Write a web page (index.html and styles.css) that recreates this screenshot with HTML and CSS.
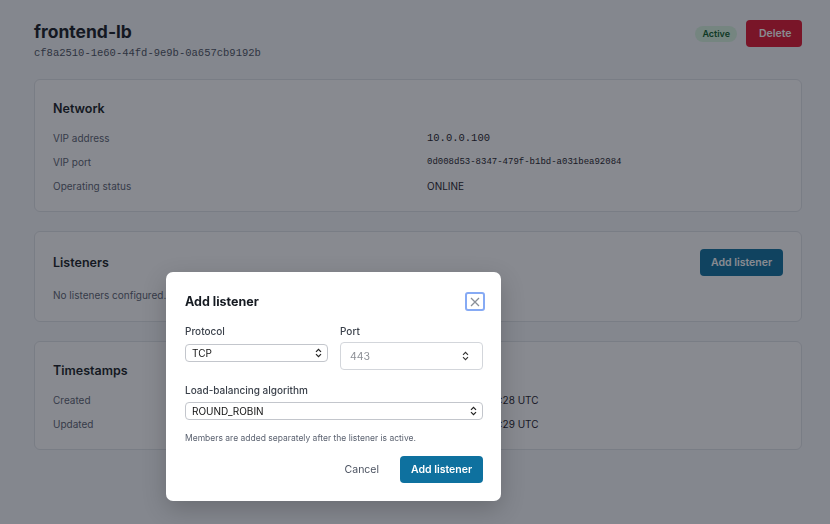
FILE: index.html
```html
<!DOCTYPE html>
<html lang="en">
<head>
  <meta charset="UTF-8">
  <title>frontend-lb | Load balancer</title>
  <meta name="viewport" content="width=device-width, initial-scale=1.0">
  <link rel="stylesheet" href="styles.css">
</head>
<body>
  <div class="page">
    <!-- HEADER -->
    <div class="page-head">
      <div>
        <h1>frontend-lb</h1>
        <div class="mono uuid">cf8a2510-1e60-44fd-9e9b-0a657cb9192b</div>
      </div>
      <div class="head-actions">
        <span class="badge">Active</span>
        <button class="btn btn-danger">Delete</button>
      </div>
    </div>

    <!-- NETWORK -->
    <div class="card">
      <h2>Network</h2>
      <div class="rows">
        <div class="label">VIP address</div>
        <div class="value mono">10.0.0.100</div>
        <div class="label">VIP port</div>
        <div class="value mono small">0d008d53-8347-479f-b1bd-a031bea92084</div>
        <div class="label">Operating status</div>
        <div class="value">ONLINE</div>
      </div>
    </div>

    <!-- LISTENERS -->
    <div class="card card-listeners">
      <div class="card-head">
        <h2>Listeners</h2>
        <button class="btn btn-primary">Add listener</button>
      </div>
      <p class="empty">No listeners configured.</p>
    </div>

    <!-- TIMESTAMPS -->
    <div class="card">
      <h2>Timestamps</h2>
      <div class="rows">
        <div class="label">Created</div>
        <div class="value">2024-5-14 9:12:28 UTC</div>
        <div class="label">Updated</div>
        <div class="value">2024-5-14 9:12:29 UTC</div>
      </div>
    </div>
  </div>

  <!-- MODAL -->
  <div class="overlay"></div>
  <div class="modal" id="addListener">
    <div class="modal-head">
      <h3>Add listener</h3>
      <button class="close" aria-label="Close">
        <svg width="10" height="10" viewBox="0 0 10 10"><path d="M1 1L9 9M9 1L1 9" stroke="#8a8f98" stroke-width="1.3" fill="none"/></svg>
      </button>
    </div>

    <div class="field-grid">
      <label class="field">
        <span class="field-label">Protocol</span>
        <span class="select-wrap">
          <select class="select">
            <option>TCP</option>
            <option>HTTP</option>
            <option>HTTPS</option>
          </select>
          <svg class="chev" width="7" height="10" viewBox="0 0 7 10"><path d="M1 3.8L3.5 1.3L6 3.8M1 6.2L3.5 8.7L6 6.2" stroke="#222" stroke-width="1.2" fill="none"/></svg>
        </span>
      </label>
      <label class="field">
        <span class="field-label">Port</span>
        <span class="select-wrap">
          <input class="input" type="number" placeholder="443">
          <svg class="chev chev-port" width="7" height="10" viewBox="0 0 7 10"><path d="M1 3.8L3.5 1.3L6 3.8M1 6.2L3.5 8.7L6 6.2" stroke="#333" stroke-width="1.1" fill="none"/></svg>
        </span>
      </label>
    </div>

    <label class="field field-wide">
      <span class="field-label">Load-balancing algorithm</span>
      <span class="select-wrap">
        <select class="select">
          <option>ROUND_ROBIN</option>
          <option>LEAST_CONNECTIONS</option>
          <option>SOURCE_IP</option>
        </select>
        <svg class="chev" width="7" height="10" viewBox="0 0 7 10"><path d="M1 3.8L3.5 1.3L6 3.8M1 6.2L3.5 8.7L6 6.2" stroke="#222" stroke-width="1.2" fill="none"/></svg>
      </span>
    </label>

    <p class="hint">Members are added separately after the listener is active.</p>

    <div class="modal-foot">
      <button class="btn btn-ghost">Cancel</button>
      <button class="btn btn-primary">Add listener</button>
    </div>
  </div>
</body>
</html>
```

FILE: styles.css
```css
body {
  margin: 0;
  background: #f7f8fa;
  font-family: 'Inter', 'Noto Sans', sans-serif;
  color: #161b22;
}
.page {
  padding: 20px 28px 0 34px;
}
.mono {
  font-family: 'Liberation Mono', monospace;
}
.page-head {
  display: flex;
  justify-content: space-between;
  align-items: flex-start;
  margin-bottom: 19px;
}
h1 {
  margin: 0;
  font-size: 17.5px;
  font-weight: 700;
  line-height: 22px;
  margin-top: 1px;
}
.uuid {
  font-size: 10.5px;
  color: #4b5260;
  margin-top: 3px;
  line-height: 14px;
}
.head-actions {
  display: flex;
  align-items: center;
  gap: 9px;
}
.badge {
  background: #d8f5df;
  color: #0b5d27;
  font-size: 9px;
  font-weight: 600;
  padding: 3px 7px;
  border-radius: 10px;
  line-height: 10px;
}
.btn {
  font-family: inherit;
  border: none;
  border-radius: 4px;
  font-size: 10.5px;
  font-weight: 600;
  height: 27px;
  padding: 0 13px;
  cursor: pointer;
}
.btn-danger {
  background: #e0142e;
  color: #fff;
  width: 56px;
}
.btn-primary {
  background: #0e719f;
  color: #fff;
  width: 83px;
  padding: 0;
}
.btn-ghost {
  background: transparent;
  color: #4b5260;
  font-weight: 400;
  padding: 0 10px;
}
.card {
  background: #fff;
  border: 1px solid #e1e4e8;
  border-radius: 6px;
  padding: 21px 18px 13px;
  margin-bottom: 19px;
}
.card h2 {
  margin: 0;
  font-size: 12.5px;
  font-weight: 600;
  line-height: 16px;
}
.rows {
  display: grid;
  grid-template-columns: 1fr 1fr;
  column-gap: 18px;
  margin-top: 9px;
}
.rows > div {
  height: 24px;
  line-height: 24px;
  font-size: 10px;
}
.label {
  color: #5b6270;
}
.value {
  color: #1b2028;
}
.value.mono {
  font-size: 10.5px;
}
.value.mono.small {
  font-size: 9px;
}
.card-listeners {
  padding: 17px 18px 18px;
}
.card-head {
  display: flex;
  justify-content: space-between;
  align-items: center;
}
.card-head h2 {
  margin-top: 1px;
}
.empty {
  margin: 11px 0 0;
  font-size: 10px;
  line-height: 16px;
  color: #5b6270;
}
.overlay {
  position: fixed;
  inset: 0;
  background: rgba(17, 22, 34, 0.5);
}
.modal {
  position: absolute;
  left: 166px;
  top: 272px;
  width: 298px;
  padding: 20px 18px 18px 19px;
  background: #fff;
  border-radius: 7px;
  box-shadow: 0 8px 24px rgba(0, 0, 0, 0.2);
}
.modal-head {
  display: flex;
  justify-content: space-between;
  align-items: center;
  height: 19px;
  margin-bottom: 13px;
}
.modal-head h3 {
  margin: 0;
  font-size: 12.5px;
  font-weight: 700;
}
.close {
  width: 20px;
  height: 19px;
  margin-right: -2px;
  padding: 0;
  border: 2px solid #86aaf4;
  border-radius: 3px;
  background: #fff;
  display: flex;
  align-items: center;
  justify-content: center;
}
.field-grid {
  display: grid;
  grid-template-columns: 1fr 1fr;
  gap: 12px;
  align-items: start;
}
.field {
  display: flex;
  flex-direction: column;
  align-items: stretch;
}
.field-label {
  font-size: 10px;
  font-weight: 500;
  color: #3a404a;
  line-height: 14px;
  margin-bottom: 4px;
}
.field-grid .field:first-child .field-label {
  margin-bottom: 6px;
}
.select-wrap {
  position: relative;
  display: block;
}
.select {
  appearance: none;
  display: block;
  width: 100%;
  height: 18px;
  border: 1px solid #c3c6cc;
  border-radius: 4px;
  background: #fff;
  font-family: inherit;
  font-size: 10px;
  color: #111;
  padding: 0 6px;
  margin: 0;
}
.input {
  display: block;
  width: 100%;
  box-sizing: border-box;
  height: 28px;
  border: 1px solid #d3d6db;
  border-radius: 4px;
  font-family: inherit;
  font-size: 10.5px;
  padding: 0 9px;
  margin: 0;
  color: #111;
  -moz-appearance: textfield;
}
.input::placeholder {
  color: #8d9096;
}
.input::-webkit-inner-spin-button,
.input::-webkit-outer-spin-button {
  -webkit-appearance: none;
  margin: 0;
}
.chev {
  position: absolute;
  right: 6px;
  top: 4px;
}
.chev-port {
  right: 14px;
  top: 9px;
}
.field-wide {
  margin-top: 13px;
}
.field-wide .field-label {
  margin-bottom: 5px;
}
.hint {
  margin: 12px 0 0;
  font-size: 8.5px;
  color: #5b6270;
  line-height: 12px;
}
.modal-foot {
  display: flex;
  justify-content: flex-end;
  gap: 11px;
  margin-top: 12px;
}
```
